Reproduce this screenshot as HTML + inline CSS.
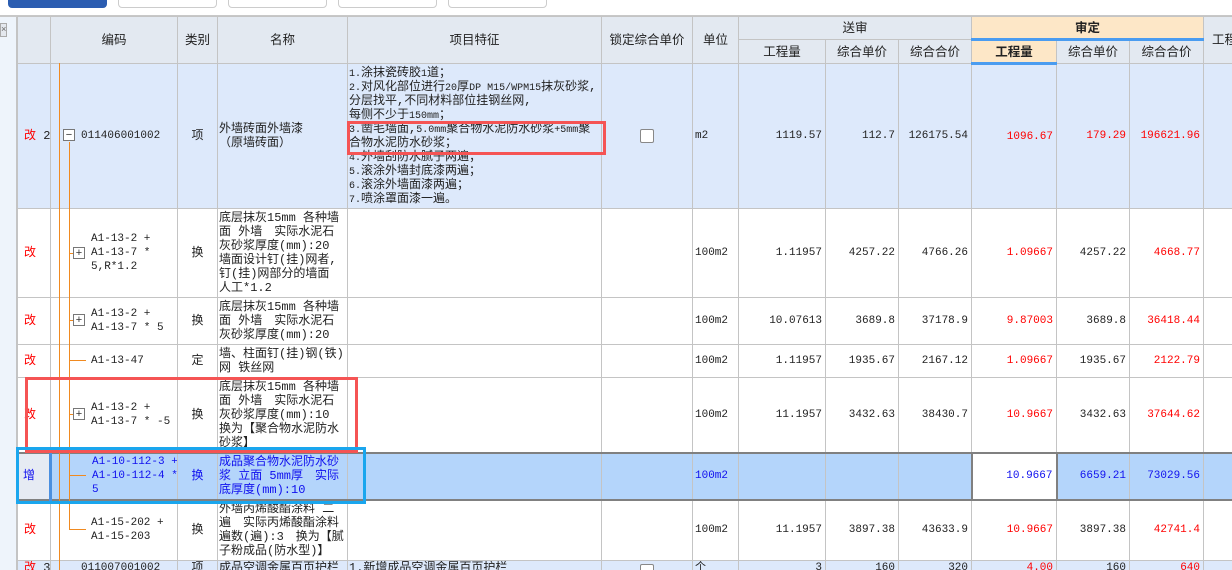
<!DOCTYPE html>
<html><head><meta charset="utf-8"><style>
*{margin:0;padding:0;box-sizing:border-box}
html,body{width:1232px;height:570px;overflow:hidden}
body{background:#fff;position:relative;font-family:"Liberation Mono","Noto Sans CJK SC",monospace;font-size:12px;color:#222}
.abs{position:absolute}
table{position:absolute;left:17px;top:16px;border-collapse:collapse;table-layout:fixed;width:1215px}
td,th{border:1px solid #c4c4c4;overflow:hidden;white-space:nowrap;line-height:14px;font-weight:normal;vertical-align:middle}
th{background:#e3e9f1;text-align:center;font-family:"Liberation Sans","Noto Sans CJK SC",sans-serif;font-size:12.5px}
.sd{background:#fde7c7}
.b{font-weight:bold}
tr.hl td{background:#dde9fb}
td.n{text-align:right;padding-right:3px;font-size:11px}
td.u{padding-left:2px;font-size:11px}
td.c{text-align:center}
td.t{padding-left:1px}
.ln{height:14px;line-height:14px;overflow:visible;white-space:nowrap}
.l{font-size:10px;line-height:10px}
.r{color:#f00}
tr.sel td{background:#b4d5fb;border-top:2px solid #808080;border-bottom:2px solid #808080;color:#1010ee}
.code{padding-left:40px;font-size:11px}
.box{position:absolute;width:12px;height:12px;border:1px solid #777;background:#fff;font-size:11px;line-height:10px;text-align:center;color:#333;font-family:"Liberation Sans",sans-serif;z-index:3}
.ol{position:absolute;background:#f08a20;z-index:2}
</style></head><body>
<div class="abs" style="left:8px;top:-6px;width:99px;height:14px;background:#2b5db1;border-radius:4px"></div>
<div class="abs" style="left:118px;top:-6px;width:99px;height:14px;border:1px solid #ccc;border-radius:4px"></div>
<div class="abs" style="left:228px;top:-6px;width:99px;height:14px;border:1px solid #ccc;border-radius:4px"></div>
<div class="abs" style="left:338px;top:-6px;width:99px;height:14px;border:1px solid #ccc;border-radius:4px"></div>
<div class="abs" style="left:448px;top:-6px;width:99px;height:14px;border:1px solid #ccc;border-radius:4px"></div>
<div class="abs" style="left:0;top:15px;width:1232px;height:2px;background:#c8c8c8"></div>
<div class="abs" style="left:0;top:17px;width:17px;height:553px;background:#eef4fb;border-right:1px solid #c4c4c4"></div>
<div class="abs" style="left:0;top:23px;width:7px;height:14px;background:#e4e8ee;border:1px solid #aaa;font-size:9px;line-height:12px;color:#666">×</div>

<table>
<colgroup><col style="width:33px"><col style="width:127px"><col style="width:40px"><col style="width:130px"><col style="width:254px"><col style="width:91px"><col style="width:46px"><col style="width:87px"><col style="width:73px"><col style="width:73px"><col style="width:85px"><col style="width:73px"><col style="width:74px"><col style="width:29px"></colgroup>
<tr style="height:23px"><th rowspan="2"></th><th rowspan="2">编码</th><th rowspan="2">类别</th><th rowspan="2">名称</th><th rowspan="2">项目特征</th><th rowspan="2">锁定综合单价</th><th rowspan="2">单位</th><th colspan="3">送审</th><th colspan="3" class="sd b" style="border-bottom:3px solid #4a9cf0">审定</th><th rowspan="2" style="text-align:left;padding-left:8px">工程</th></tr>
<tr style="height:24px"><th>工程量</th><th>综合单价</th><th>综合合价</th><th class="sd b" style="border-bottom:3px solid #4a9cf0">工程量</th><th>综合单价</th><th>综合合价</th></tr>
<tr class="hl" style="height:145px"><td style="padding-left:6px"><span class="r">改</span> 2</td><td class="code" style="padding-left:30px">011406001002</td><td class="c">项</td><td class="t">外墙砖面外墙漆<br>（原墙砖面）</td><td class="t"><div style="height:143px;overflow:hidden;padding-top:1px">
<div class="ln"><span class="l">1.</span>涂抹瓷砖胶<span class="l">1</span>道；</div>
<div class="ln"><span class="l">2.</span>对风化部位进行<span class="l">20</span>厚<span class="l">DP M15/WPM15</span>抹灰砂浆,</div>
<div class="ln">分层找平,不同材料部位挂钢丝网,</div>
<div class="ln">每侧不少于<span class="l">150mm</span>；</div>
<div class="ln"><span class="l">3.</span>凿毛墙面,<span class="l">5.0mm</span>聚合物水泥防水砂浆<span class="l">+5mm</span>聚</div>
<div class="ln">合物水泥防水砂浆；</div>
<div class="ln"><span class="l">4.</span>外墙刮防水腻子两遍；</div>
<div class="ln"><span class="l">5.</span>滚涂外墙封底漆两遍；</div>
<div class="ln"><span class="l">6.</span>滚涂外墙面漆两遍；</div>
<div class="ln"><span class="l">7.</span>喷涂罩面漆一遍。</div></div></td><td></td><td class="u">m2</td><td class="n">1119.57</td><td class="n">112.7</td><td class="n">126175.54</td><td class="n r">1096.67</td><td class="n r">179.29</td><td class="n r">196621.96</td><td></td></tr>
<tr style="height:89px"><td style="padding-left:6px" class="r">改</td><td class="code">A1-13-2 +<br>A1-13-7 *<br>5,R*1.2</td><td class="c">换</td><td class="t">底层抹灰15mm 各种墙<br>面 外墙　实际水泥石<br>灰砂浆厚度(mm):20<br>墙面设计钉(挂)网者,<br>钉(挂)网部分的墙面<br>人工*1.2</td><td></td><td></td><td class="u">100m2</td><td class="n">1.11957</td><td class="n">4257.22</td><td class="n">4766.26</td><td class="n r">1.09667</td><td class="n">4257.22</td><td class="n r">4668.77</td><td></td></tr>
<tr style="height:47px"><td style="padding-left:6px" class="r">改</td><td class="code">A1-13-2 +<br>A1-13-7 * 5</td><td class="c">换</td><td class="t">底层抹灰15mm 各种墙<br>面 外墙　实际水泥石<br>灰砂浆厚度(mm):20</td><td></td><td></td><td class="u">100m2</td><td class="n">10.07613</td><td class="n">3689.8</td><td class="n">37178.9</td><td class="n r">9.87003</td><td class="n">3689.8</td><td class="n r">36418.44</td><td></td></tr>
<tr style="height:33px"><td style="padding-left:6px" class="r">改</td><td class="code">A1-13-47</td><td class="c">定</td><td class="t">墙、柱面钉(挂)钢(铁)<br>网 铁丝网</td><td></td><td></td><td class="u">100m2</td><td class="n">1.11957</td><td class="n">1935.67</td><td class="n">2167.12</td><td class="n r">1.09667</td><td class="n">1935.67</td><td class="n r">2122.79</td><td></td></tr>
<tr style="height:75px"><td style="padding-left:6px" class="r">改</td><td class="code">A1-13-2 +<br>A1-13-7 * -5</td><td class="c">换</td><td class="t">底层抹灰15mm 各种墙<br>面 外墙　实际水泥石<br>灰砂浆厚度(mm):10<br>换为【聚合物水泥防水<br>砂浆】</td><td></td><td></td><td class="u">100m2</td><td class="n">11.1957</td><td class="n">3432.63</td><td class="n">38430.7</td><td class="n r">10.9667</td><td class="n">3432.63</td><td class="n r">37644.62</td><td></td></tr>
<tr class="sel" style="height:47px"><td style="padding-left:5px;background:#e6ebf3;border-right:3px solid #4a8fe0">增</td><td class="code">A1-10-112-3 +<br>A1-10-112-4 *<br>5</td><td class="c">换</td><td class="t">成品聚合物水泥防水砂<br>浆 立面 5mm厚　实际<br>底厚度(mm):10</td><td></td><td></td><td class="u">100m2</td><td></td><td></td><td></td><td class="n" style="background:#fff;border:2px solid #808080">10.9667</td><td class="n">6659.21</td><td class="n">73029.56</td><td></td></tr>
<tr style="height:61px"><td style="padding-left:6px" class="r">改</td><td class="code">A1-15-202 +<br>A1-15-203</td><td class="c">换</td><td class="t">外墙丙烯酸酯涂料 二<br>遍　实际丙烯酸酯涂料<br>遍数(遍):3　换为【腻<br>子粉成品(防水型)】</td><td></td><td></td><td class="u">100m2</td><td class="n">11.1957</td><td class="n">3897.38</td><td class="n">43633.9</td><td class="n r">10.9667</td><td class="n">3897.38</td><td class="n r">42741.4</td><td></td></tr>
<tr class="hl" style="height:30px"><td style="padding-left:6px;vertical-align:top"><span class="r">改</span> 3</td><td class="code" style="padding-left:30px;vertical-align:top">011007001002</td><td class="c" style="vertical-align:top">项</td><td class="t" style="vertical-align:top">成品空调金属百页护栏</td><td class="t" style="vertical-align:top">1.新增成品空调金属百页护栏</td><td></td><td class="u" style="vertical-align:top">个</td><td class="n" style="vertical-align:top">3</td><td class="n" style="vertical-align:top">160</td><td class="n" style="vertical-align:top">320</td><td class="n r" style="vertical-align:top">4.00</td><td class="n" style="vertical-align:top">160</td><td class="n r" style="vertical-align:top">640</td><td></td></tr>
</table>

<div class="abs" style="left:640px;top:129px;width:14px;height:14px;border:1px solid #888;border-radius:2px;background:#fff"></div>
<div class="abs" style="left:640px;top:564px;width:14px;height:14px;border:1px solid #888;border-radius:2px;background:#fff"></div>

<div class="ol" style="left:59px;top:63px;width:1px;height:507px"></div>
<div class="ol" style="left:69px;top:142px;width:1px;height:388px"></div>
<div class="ol" style="left:69px;top:253px;width:4px;height:1px"></div>
<div class="ol" style="left:69px;top:320px;width:4px;height:1px"></div>
<div class="ol" style="left:69px;top:360px;width:17px;height:1px"></div>
<div class="ol" style="left:69px;top:414px;width:4px;height:1px"></div>
<div class="ol" style="left:69px;top:475px;width:17px;height:1px"></div>
<div class="ol" style="left:69px;top:529px;width:17px;height:1px"></div>
<div class="box" style="left:63px;top:129px">−</div>
<div class="box" style="left:73px;top:247px">+</div>
<div class="box" style="left:73px;top:314px">+</div>
<div class="box" style="left:73px;top:408px">+</div>

<div class="abs" style="left:347px;top:121px;width:259px;height:34px;border:3px solid #f55454;z-index:4"></div>
<div class="abs" style="left:25px;top:377px;width:333px;height:76px;border:3px solid #f55454;z-index:4"></div>
<div class="abs" style="left:16px;top:447px;width:350px;height:57px;border:3px solid #1aa6ee;z-index:4"></div>
</body></html>
